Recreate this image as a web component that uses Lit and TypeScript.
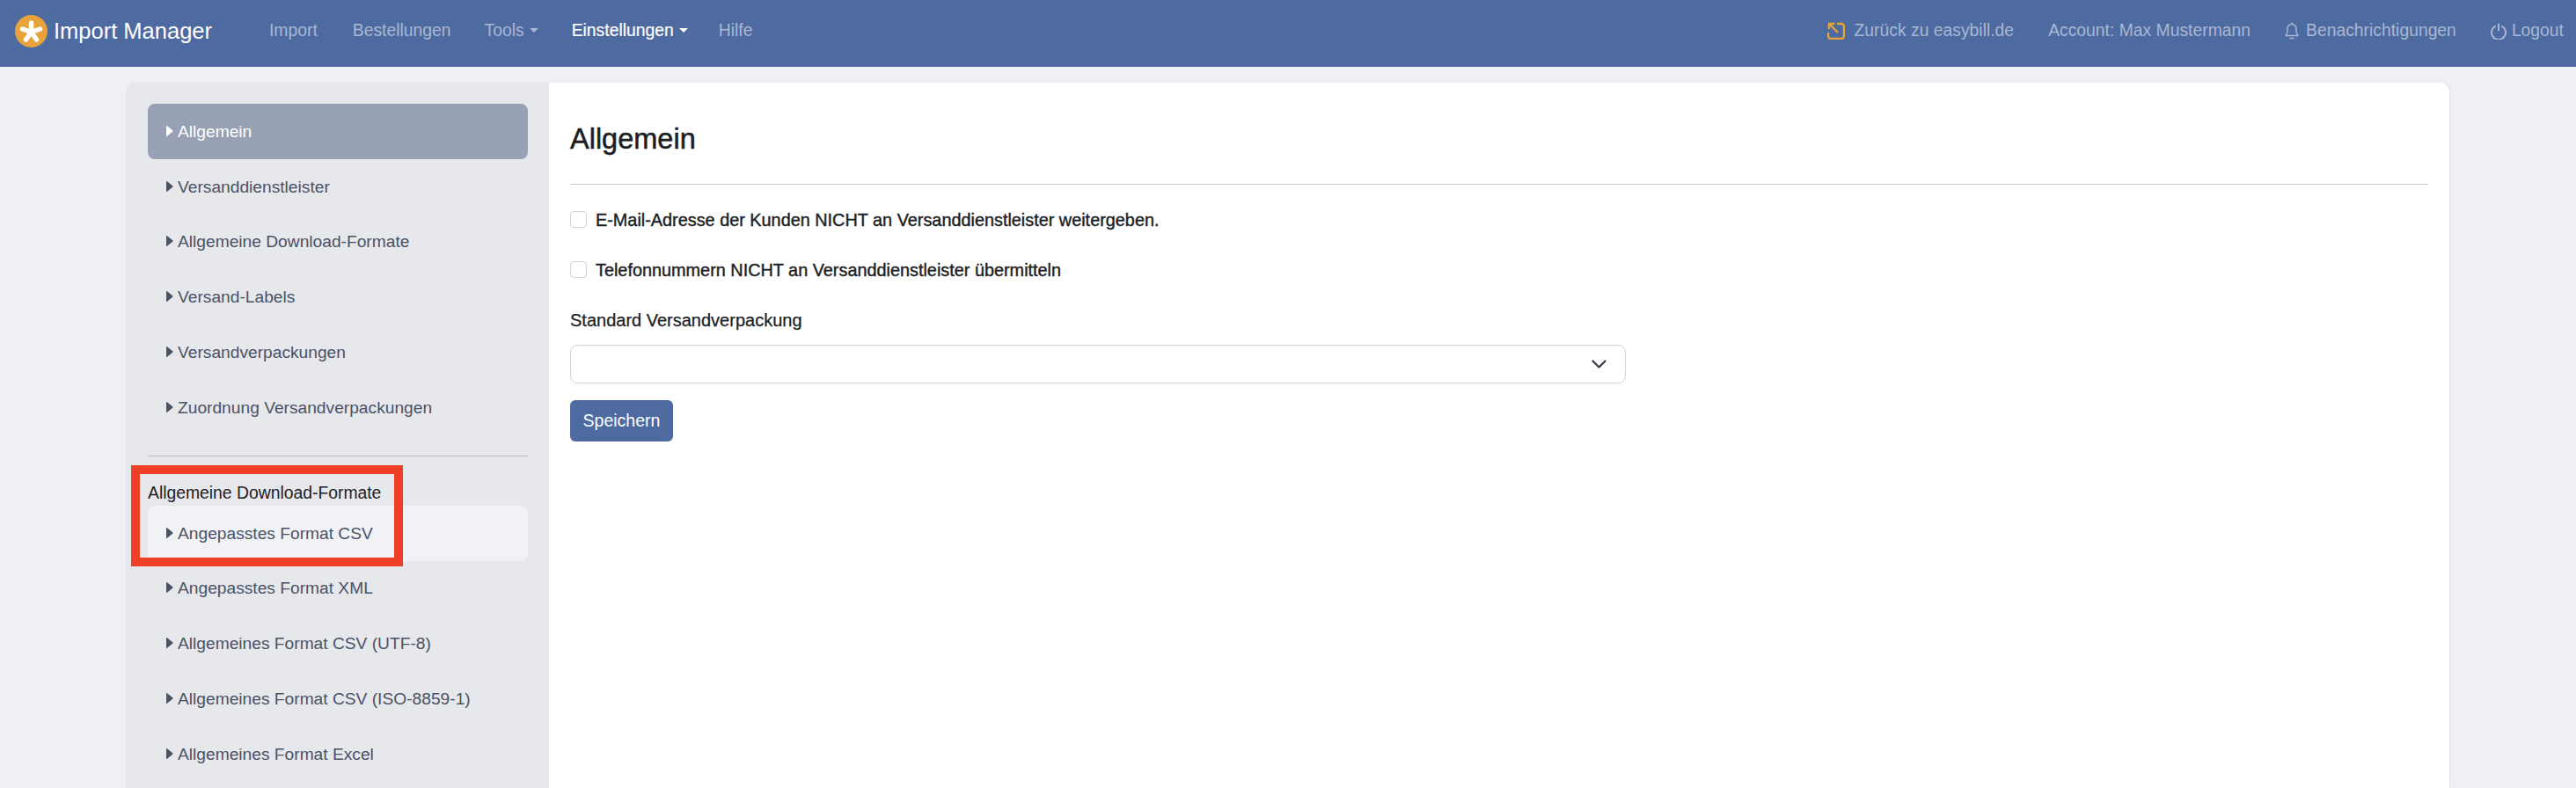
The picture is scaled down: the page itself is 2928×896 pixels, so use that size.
import { LitElement, html, css } from "lit";
import { customElement } from "lit/decorators.js";

const caretRight = html`<svg class="tri" viewBox="0 0 8 14"><path d="M1 1.200 7.200 6.300a1 1 0 0 1 0 1.400L1 12.800a.6.6 0 0 1-1-.5V1.700a.6.6 0 0 1 1-.5z" fill="currentColor"/></svg>`;

const top = ["Versanddienstleister", "Allgemeine Download-Formate", "Versand-Labels", "Versandverpackungen", "Zuordnung Versandverpackungen"];
const bottom = ["Angepasstes Format XML", "Allgemeines Format CSV (UTF-8)", "Allgemeines Format CSV (ISO-8859-1)", "Allgemeines Format Excel"];

@customElement("app-root")
export class AppRoot extends LitElement {
  static styles = css`
    :host { display: block; height: 896px; overflow: hidden; background: #eff0f4; font-family: "Liberation Sans", Arial, sans-serif; position: relative; }
    * { box-sizing: border-box; }
    nav { height: 76px; background: #4d6aa1; display: flex; align-items: center; padding: 0 14px 6px 17px; color: #a9b7d2; font-size: 19.33px; }
    .brand { display: flex; align-items: center; gap: 7px; color: #fff; font-size: 25.5px; margin-right: 65px; }
    .logo { width: 37px; height: 37px; display: block; }
    .links { display: flex; align-items: center; gap: 38px; }
    .links .on { color: #fff; -webkit-text-stroke: .2px currentColor; }
    .links .first { margin-right: 2px; }
    .links .last { margin-left: -3px; }
    .dd { display: flex; align-items: center; gap: 6px; }
    .dd::after { content: ""; border-top: 5px solid currentColor; border-left: 5px solid transparent; border-right: 5px solid transparent; margin-top: -2px; }
    .right { margin-left: auto; display: flex; align-items: center; gap: 39px; }
    .ic { display: flex; align-items: center; gap: 8px; }
    .ic.wide { gap: 11px; }
    .ic.tight { gap: 6px; }
    .ic svg { display: block; }
    .card { margin: 18px 144px 0 143px; display: flex; height: 802px; border-radius: 10px 10px 0 0; box-shadow: 1px 0 2px rgba(0,0,0,.06); overflow: hidden; }
    aside { width: 481px; flex: none; background: #e7e8ec; padding: 24px 24px 0 25px; color: #4a5265; font-size: 19.2px; }
    .item { height: 62.8px; display: flex; align-items: center; gap: 5px; padding: 1px 0 0 21px; border-radius: 8px; }
    .item.active { background: #98a1b4; color: #fff; }
    .item.hover { background: #f1f2f6; }
    .tri { width: 8px; height: 14px; display: block; margin-top: -2px; }
    hr { border: 0; height: 1px; background: #bbbcc1; margin: 0; }
    aside hr { margin: 23px 0 30px; }
    .sub { color: #1e2025; font-size: 19.33px; line-height: 23px; height: 26px; }
    main { flex: 1; background: #fff; padding: 41px 24px 0 24px; color: #1b1e23; }
    h1 { font-size: 32.5px; font-weight: 400; margin: 0; line-height: 46px; -webkit-text-stroke: .5px currentColor; }
    main hr { margin: 28px 0 28px; background: #c8c8c8; }
    .check { display: flex; align-items: center; gap: 10px; font-size: 19.85px; height: 24px; margin-bottom: 33px; -webkit-text-stroke: .4px currentColor; }
    .box { width: 19px; height: 19px; border: 1px solid #ced4da; border-radius: 4px; background: #fff; margin-top: -2px; }
    .lbl { font-size: 20px; height: 24px; line-height: 24px; margin: 1px 0 16px; -webkit-text-stroke: .25px currentColor; }
    .select { width: 1200px; height: 44px; border: 1.5px solid #ced4da; border-radius: 8px; display: flex; align-items: center; justify-content: flex-end; padding-right: 21px; }
    .select svg { display: block; }
    button { display: block; margin-top: 19px; width: 117px; height: 47px; padding: 0; background: #4d6aa1; color: #fff; border: 0; border-radius: 6px; font: 400 19.5px "Liberation Sans", Arial, sans-serif; }
    .mark { position: absolute; left: 149px; top: 529px; width: 309px; height: 115px; border: 10px solid #ee4026; pointer-events: none; }
  `;

  render() {
    return html`
      <nav>
        <div class="brand">
          <svg class="logo" viewBox="0 0 37 37">
            <circle cx="18.5" cy="18.5" r="18.5" fill="#e8a33a"/>
            <g stroke="#fff" stroke-width="5.5" stroke-linecap="round">
              <path d="M18.5 19.500V9"/><path d="M18.5 19.500L8.500 16"/><path d="M18.500 19.500L28.500 16"/>
              <path d="M18.500 19.500L12.500 28"/><path d="M18.500 19.500L24.500 28"/>
            </g>
          </svg>
          Import Manager
        </div>
        <div class="links">
          <span class="first">Import</span><span>Bestellungen</span><span class="dd">Tools</span>
          <span class="dd on">Einstellungen</span><span class="last">Hilfe</span>
        </div>
        <div class="right">
          <span class="ic wide">
            <svg width="20" height="20" viewBox="0 0 20 20" fill="none" stroke="#e8a33a" stroke-width="2.4" stroke-linejoin="round">
              <path d="M2 8V2h6.500M2 2l10 10"/>
              <path d="M11 2h5a3 3 0 0 1 3 3v11a3 3 0 0 1-3 3H4a3 3 0 0 1-3-3v-4"/>
            </svg>
            Zurück zu easybill.de
          </span>
          <span>Account: Max Mustermann</span>
          <span class="ic">
            <svg width="16" height="20" viewBox="0 0 16 20" fill="none" stroke="currentColor" stroke-width="1.5" stroke-linejoin="round">
              <path d="M1 15.500c1.500-1.500 2-3 2-6V7.500a5 5 0 0 1 10 0v2c0 3 .5 4.500 2 6z"/><path d="M5.500 18.500h5M8 .5v2"/>
            </svg>
            Benachrichtigungen
          </span>
          <span class="ic tight">
            <svg width="18" height="19" viewBox="0 0 18 19" fill="none" stroke="currentColor" stroke-width="2" stroke-linecap="round">
              <path d="M9 1.500v7"/><path d="M5 4a8 8 0 1 0 8 0"/>
            </svg>
            Logout
          </span>
        </div>
      </nav>
      <div class="card">
        <aside>
          <div class="item active">${caretRight}Allgemein</div>
          ${top.map((t) => html`<div class="item">${caretRight}${t}</div>`)}
          <hr />
          <div class="sub">Allgemeine Download-Formate</div>
          <div class="item hover">${caretRight}Angepasstes Format CSV</div>
          ${bottom.map((t) => html`<div class="item">${caretRight}${t}</div>`)}
        </aside>
        <main>
          <h1>Allgemein</h1>
          <hr />
          <div class="check"><span class="box"></span>E-Mail-Adresse der Kunden NICHT an Versanddienstleister weitergeben.</div>
          <div class="check"><span class="box"></span>Telefonnummern NICHT an Versanddienstleister übermitteln</div>
          <div class="lbl">Standard Versandverpackung</div>
          <div class="select">
            <svg width="17" height="10" viewBox="0 0 17 10" fill="none" stroke="#343a40" stroke-width="2.2" stroke-linecap="round" stroke-linejoin="round"><path d="M1.500 1.500l7 7 7-7"/></svg>
          </div>
          <button>Speichern</button>
        </main>
      </div>
      <div class="mark"></div>
    `;
  }
}
